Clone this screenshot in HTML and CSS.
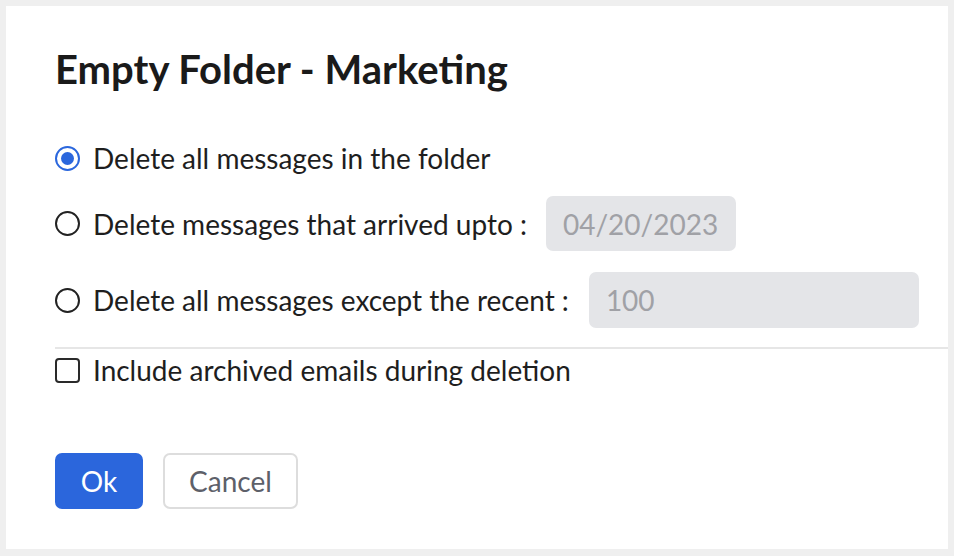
FILE: index.html
```html
<!DOCTYPE html>
<html lang="en">
<head>
<meta charset="utf-8">
<title>Empty Folder - Marketing</title>
<link rel="stylesheet" href="styles.css">
</head>
<body>
<div class="dialog">
  <h1 class="title">Empty Folder - Marketing</h1>
  <div class="options">
    <label class="row row-first">
      <span class="radio radio-on"></span>
      <span class="label">Delete all messages in the folder</span>
    </label>
    <label class="row row-date">
      <span class="radio"></span>
      <span class="label">Delete messages that arrived upto :</span>
      <span class="field field-date">04/20/2023</span>
    </label>
    <label class="row row-recent">
      <span class="radio"></span>
      <span class="label">Delete all messages except the recent :</span>
      <span class="field field-count">100</span>
    </label>
  </div>
  <div class="divider"></div>
  <label class="row row-check">
    <span class="checkbox"></span>
    <span class="label">Include archived emails during deletion</span>
  </label>
  <div class="actions">
    <button class="btn btn-primary">Ok</button>
    <button class="btn btn-secondary">Cancel</button>
  </div>
</div>
</body>
</html>
```
FILE: styles.css
```css
* { box-sizing: border-box; }
html, body { margin: 0; padding: 0; }
body {
  background: #efefef;
  padding: 6px 6px 7px 6px;
  font-family: Lato, "Noto Sans", sans-serif;
  color: #1e1e1e;
}
.dialog {
  background: #fff;
  height: 543px;
  padding: 39px 0 0 49px;
}
.title {
  margin: 0;
  font-size: 40px;
  line-height: 48px;
  font-weight: 700;
  color: #1a1a1a;
}
.options {
  display: flex;
  flex-direction: column;
  margin-top: 37px;
}
.row {
  display: flex;
  align-items: center;
  font-size: 28px;
}
.row-first { height: 56px; margin-top: 0; }
.row-date { height: 55px; margin-top: 10px; }
.row-recent { height: 56px; margin-top: 21px; }
.label { line-height: 34px; }
.radio {
  width: 25px;
  height: 25px;
  border: 2px solid #222;
  border-radius: 50%;
  margin-right: 13px;
  flex: none;
  display: flex;
  align-items: center;
  justify-content: center;
}
.radio-on { border-color: #2b67dd; }
.radio-on::after {
  content: "";
  width: 13px;
  height: 13px;
  border-radius: 50%;
  background: #2b67dd;
}
.field {
  height: 100%;
  display: flex;
  align-items: center;
  padding-left: 17px;
  background: #e4e5e8;
  color: #a0a1a6;
  border-radius: 7px;
}
.field-date { width: 190px; margin-left: 19px; }
.field-count { width: 330px; margin-left: 20px; }
.divider {
  height: 2px;
  background: #e6e6e6;
  margin-top: 19px;
}
.row-check { height: 42px; }
.checkbox {
  width: 25px;
  height: 25px;
  border: 2px solid #2a2a2a;
  border-radius: 4px;
  margin-right: 13px;
  flex: none;
}
.actions {
  display: flex;
  gap: 20px;
  margin-top: 62px;
}
.btn {
  height: 56px;
  font-family: Lato, "Noto Sans", sans-serif;
  font-size: 28px;
  border-radius: 7px;
  cursor: pointer;
  padding: 0;
}
.btn-primary {
  width: 88px;
  background: #2b66dc;
  color: #fff;
  border: none;
}
.btn-secondary {
  width: 135px;
  background: #fff;
  color: #5d6069;
  border: 2px solid #dddddd;
}
```
